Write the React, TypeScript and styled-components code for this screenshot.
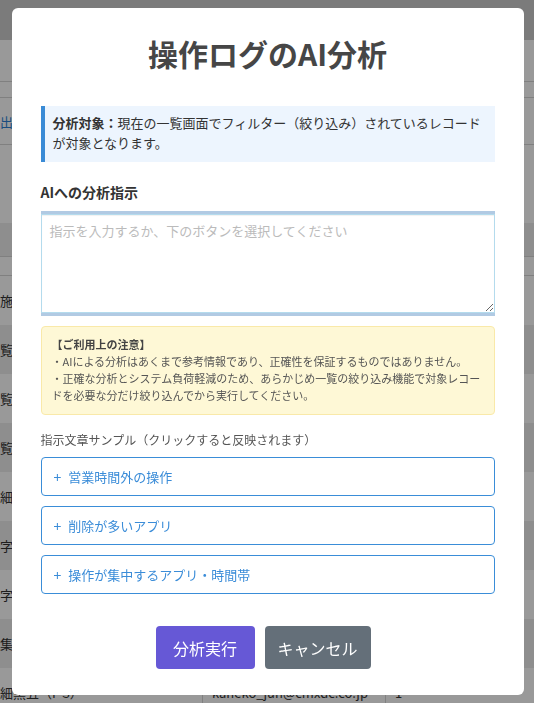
import * as React from 'react';
import styled, { createGlobalStyle } from 'styled-components';

const GlobalStyle = createGlobalStyle`
	html, body {
		margin: 0;
		padding: 0;
		background: #fff;
		font-family: "Noto Sans CJK JP", "Noto Sans", sans-serif;
		overflow: hidden;
	}
	* {
		box-sizing: border-box;
	}
`;

/* ---------- page behind the dialog ---------- */

const Page = styled.div`
	width: 534px;
	height: 703px;
	overflow: hidden;
	background: #fff;
`;

const TopBar = styled.div`
	height: 40px;
	background: #cdcdcd;
`;

const SubBar = styled.div<{ h: number }>`
	height: ${p => p.h}px;
	border-bottom: 1px solid #d6d6d6;
`;

const LinkRow = styled.div`
	height: 47px;
	display: flex;
	align-items: center;
	margin-left: -52px;
	color: #2a7fd4;
	font-size: 13px;
	border-bottom: 1px solid #d6d6d6;
`;

const Spacer = styled.div`
	height: 78px;
`;

const Table = styled.div`
	margin-left: -39px;
	width: 620px;
	font-size: 13px;
	color: #333;
`;

const HeadRow = styled.div`
	height: 34px;
	background: #ededed;
	border-bottom: 1px solid #d6d6d6;
`;

const FilterRow = styled.div`
	height: 19px;
	border-bottom: 1px solid #d6d6d6;
`;

const BodyRow = styled.div<{ shade: boolean }>`
	display: grid;
	grid-template-columns: 242px 183px 1fr;
	height: 49px;
	background: ${p => (p.shade ? '#ededed' : '#fff')};
`;

const Cell = styled.div`
	display: flex;
	align-items: center;
	border-right: 1px solid #d6d6d6;
	white-space: nowrap;
	overflow: hidden;
	&:not(:first-child) {
		padding-left: 9px;
	}
`;

const Overlay = styled.div`
	position: fixed;
	inset: 0;
	padding-left: 1px;
	background: rgba(0, 0, 0, 0.4);
	display: flex;
	align-items: center;
	justify-content: center;
`;

/* ---------- dialog ---------- */

const Dialog = styled.div`
	width: 512px;
	background: #fff;
	border-radius: 6px;
	padding: 27px 0 26px;
	display: flex;
	flex-direction: column;
`;

const Title = styled.h2`
	margin: 0;
	text-align: center;
	font-size: 30px;
	line-height: 36px;
	font-weight: 700;
	color: #464646;
`;

const Body = styled.div`
	padding: 0 29px;
	margin-top: 35px;
	display: flex;
	flex-direction: column;
`;

const InfoBox = styled.div`
	background: #edf5fe;
	border-left: 4px solid #3a8bd6;
	padding: 7px 12px 9px 8px;
	font-size: 13px;
	line-height: 20px;
	color: #333;
`;

const Strong = styled.strong`
	font-weight: 700;
`;

const FieldLabel = styled.div`
	margin-top: 20px;
	font-size: 14px;
	line-height: 20px;
	font-weight: 700;
	color: #333;
`;

const Prompt = styled.textarea`
	margin-top: 12px;
	width: 100%;
	height: 99px;
	border: 1px solid #b4dbed;
	border-radius: 0;
	padding: 6px 8px;
	font-family: inherit;
	font-size: 13px;
	line-height: 20px;
	color: #333;
	outline: none;
	box-shadow: inset 0 1px 1px rgba(0, 0, 0, 0.06), 0 -3px 0 rgba(100, 150, 200, 0.5), 0 3px 0 rgba(100, 150, 200, 0.5);
	&::placeholder {
		color: #bbb;
	}
`;

const Notice = styled.div`
	margin-top: 13px;
	background: #fef8d6;
	border: 1px solid #f9e9a9;
	border-radius: 4px;
	padding: 9px 10px 10px;
	font-size: 11px;
	line-height: 17px;
	color: #555;
`;

const NoticeTitle = styled.div`
	font-weight: 700;
	color: #444;
`;

const SampleLabel = styled.div`
	margin-top: 16px;
	font-size: 12px;
	line-height: 18px;
	color: #555;
`;

const SampleList = styled.div`
	margin-top: 8px;
	display: flex;
	flex-direction: column;
	gap: 10px;
`;

const SampleButton = styled.button`
	display: flex;
	align-items: center;
	height: 39px;
	padding: 0 12px;
	background: #fff;
	border: 1px solid #3a8dd8;
	border-radius: 4px;
	font-family: inherit;
	font-size: 13px;
	color: #3a8cd8;
	text-align: left;
	cursor: pointer;
`;

const Plus = styled.span`
	font-size: 14px;
	margin-right: 7px;
`;

const Actions = styled.div`
	margin-top: 32px;
	padding-right: 9px;
	display: flex;
	justify-content: center;
	gap: 10px;
`;

const ActionButton = styled.button<{ bg: string; w: number }>`
	width: ${p => p.w}px;
	height: 43px;
	border: none;
	border-radius: 4px;
	background: ${p => p.bg};
	color: #fff;
	font-family: inherit;
	font-size: 16px;
	cursor: pointer;
`;

const samples = ['営業時間外の操作', '削除が多いアプリ', '操作が集中するアプリ・時間帯'];

const rows = [
	['作業実施', 'tanaka_k@cmxdc.co.jp', '3'],
	['一覧閲覧', 'sato_m@cmxdc.co.jp', '12'],
	['記録閲覧', 'suzuki_t@cmxdc.co.jp', '5'],
	['履歴閲覧', 'ito_h@cmxdc.co.jp', '8'],
	['ログ詳細', 'kato_y@cmxdc.co.jp', '2'],
	['入力文字', 'yamada_s@cmxdc.co.jp', '4'],
	['半角数字', 'kimura_r@cmxdc.co.jp', '1'],
	['一括編集', 'hayashi_n@cmxdc.co.jp', '6'],
	['ログ詳細黒五（F S）', 'kaneko_jun@cmxdc.co.jp', '1'],
];

const App: React.FC = () => {
	return (
		<>
			<GlobalStyle />
			<Page>
				<TopBar />
				<SubBar h={42} />
				<SubBar h={16} />
				<LinkRow>レコード出力</LinkRow>
				<Spacer />
				<Table>
					<HeadRow />
					<FilterRow />
					{rows.map((r, i) => (
						<BodyRow key={i} shade={i % 2 === 1}>
							<Cell>{r[0]}</Cell>
							<Cell>{r[1]}</Cell>
							<Cell>{r[2]}</Cell>
						</BodyRow>
					))}
				</Table>
			</Page>
			<Overlay>
				<Dialog>
					<Title>操作ログのAI分析</Title>
					<Body>
						<InfoBox>
							<Strong>分析対象：</Strong>現在の一覧画面でフィルター（絞り込み）されているレコードが対象となります。
						</InfoBox>
						<FieldLabel>AIへの分析指示</FieldLabel>
						<Prompt placeholder='指示を入力するか、下のボタンを選択してください' />
						<Notice>
							<NoticeTitle>【ご利用上の注意】</NoticeTitle>
							<div>・AIによる分析はあくまで参考情報であり、正確性を保証するものではありません。</div>
							<div>・正確な分析とシステム負荷軽減のため、あらかじめ一覧の絞り込み機能で対象レコードを必要な分だけ絞り込んでから実行してください。</div>
						</Notice>
						<SampleLabel>指示文章サンプル（クリックすると反映されます）</SampleLabel>
						<SampleList>
							{samples.map(s => (
								<SampleButton key={s} type='button'>
									<Plus>+</Plus>
									{s}
								</SampleButton>
							))}
						</SampleList>
					</Body>
					<Actions>
						<ActionButton bg='#6658d6' w={99} type='button'>分析実行</ActionButton>
						<ActionButton bg='#646f79' w={106} type='button'>キャンセル</ActionButton>
					</Actions>
				</Dialog>
			</Overlay>
		</>
	);
};

export default App;
